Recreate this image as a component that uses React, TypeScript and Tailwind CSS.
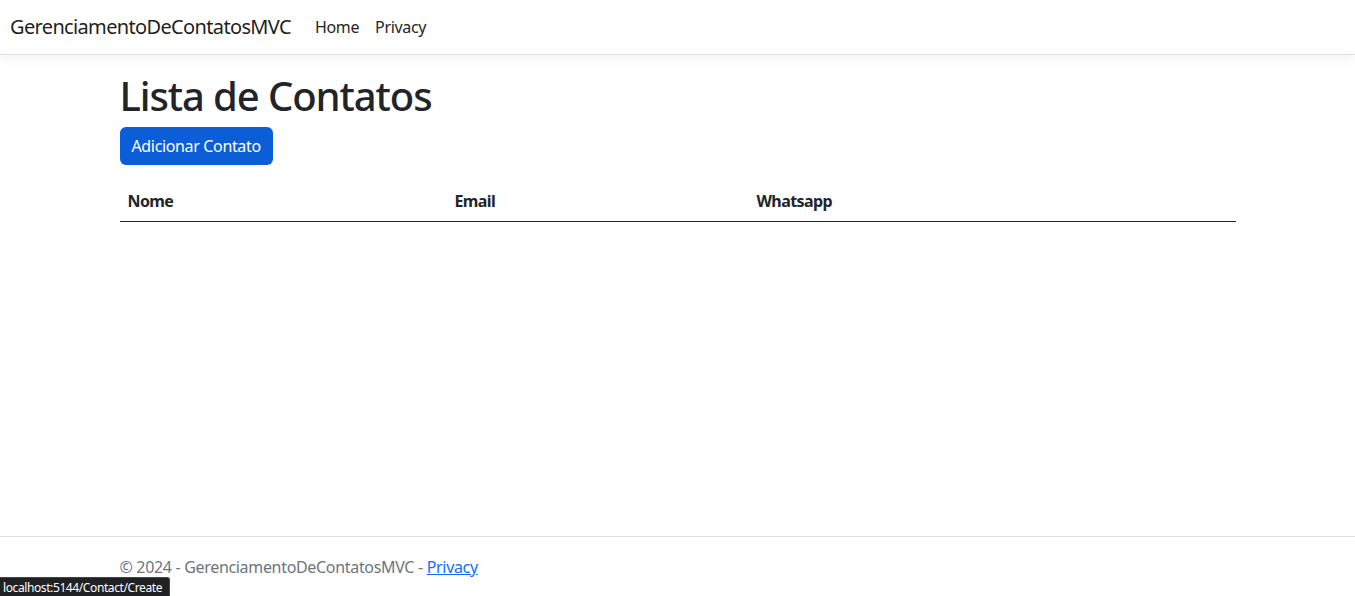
import React from "react";

export default function App() {
  const font = { fontFamily: '"Noto Sans", "Open Sans", sans-serif' };
  return (
    <div
      className="relative h-[596px] w-full overflow-hidden bg-white text-[#212529] flex flex-col"
      style={font}
    >
      <header className="h-[55px] shrink-0 border-b border-[#dee2e6] bg-white shadow-[0_4px_12px_rgba(0,0,0,0.05)] flex items-center px-[10px]">
        <span className="text-[20px] leading-[30px] tracking-[-0.65px] text-[rgba(0,0,0,0.9)]">
          GerenciamentoDeContatosMVC
        </span>
        <nav className="flex ml-[16px] text-[16px] leading-[24px] tracking-[-0.35px] text-[#212529]">
          <span className="px-[8px]">Home</span>
          <span className="px-[8px]">Privacy</span>
        </nav>
      </header>

      <main className="flex-1 w-[1116px] mx-auto pt-[17px]">
        <h1 className="text-[40px] leading-[48px] font-medium tracking-[-1.1px] mb-[7px]">
          Lista de Contatos
        </h1>
        <div className="mb-[16px]">
          <span className="inline-block bg-[#0b5ed7] text-white text-[16px] leading-[24px] tracking-[-0.35px] px-[12px] py-[7px] rounded-[6px]">
            Adicionar Contato
          </span>
        </div>
        <div className="grid grid-cols-[327px_302px_1fr] border-b border-[#212529] text-[16px] leading-[24px] font-bold tracking-[-0.6px]">
          <div className="p-[8px]">Nome</div>
          <div className="p-[8px]">Email</div>
          <div className="p-[8px]">Whatsapp</div>
        </div>
      </main>

      <footer className="h-[60px] shrink-0 border-t border-[#dee2e6] text-[#6c757d] text-[16px] leading-[60px] tracking-[-0.32px]">
        <div className="w-[1116px] mx-auto">
          © 2024 - GerenciamentoDeContatosMVC -{" "}
          <span className="text-[#0d6efd] underline">Privacy</span>
        </div>
      </footer>

      <div className="absolute left-0 bottom-0 h-[19px] w-[170px] bg-[#202124] text-white text-[12px] leading-[19px] tracking-[-0.4px] pl-[3px] rounded-tr-[3px] border border-[#444] border-l-0 border-b-0 whitespace-nowrap overflow-hidden">
        localhost:5144/Contact/Create
      </div>
    </div>
  );
}
